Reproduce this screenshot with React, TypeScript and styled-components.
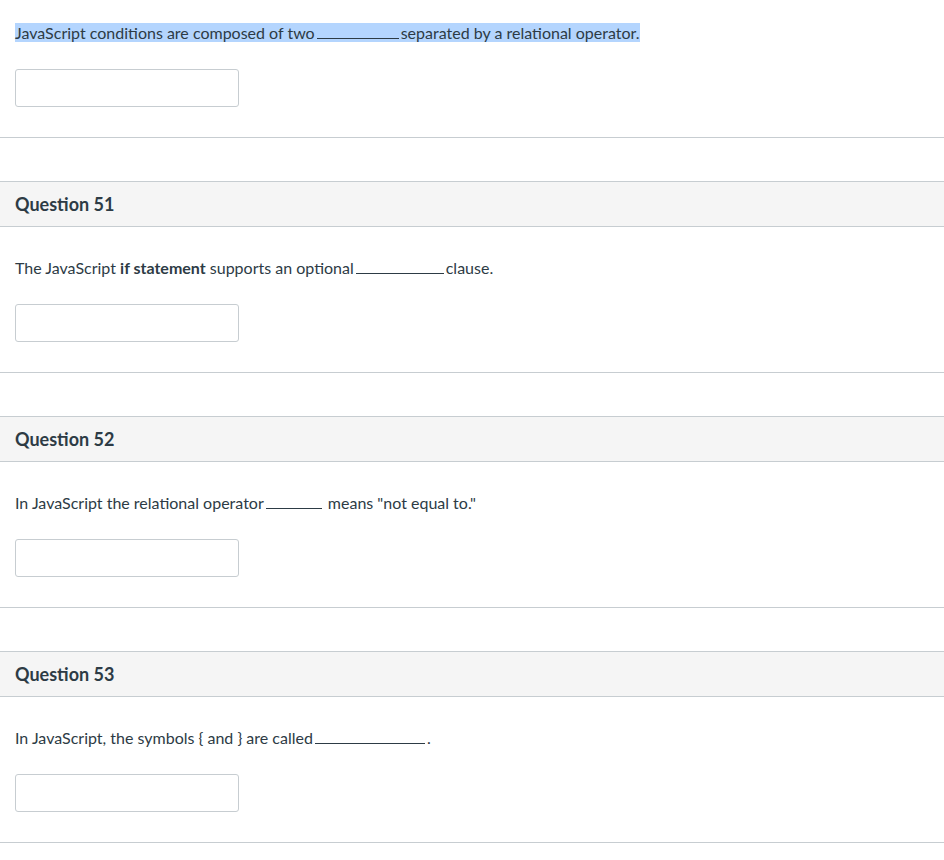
import React from 'react';
import styled, { createGlobalStyle } from 'styled-components';

const Global = createGlobalStyle`
  body {
    margin: 0;
    background: #fff;
    font-family: Lato, "Open Sans", sans-serif;
    color: #2d3b45;
  }
`;

const Page = styled.div`
  width: 944px;
`;

const Block = styled.div`
  border-bottom: 1px solid #c7cdd1;
`;

const Header = styled.div`
  margin-top: 43px;
  height: 44px;
  background: #f5f5f5;
  border-top: 1px solid #c7cdd1;
  border-bottom: 1px solid #c7cdd1;
  display: flex;
  align-items: center;
  padding-left: 15px;
  font-size: 18px;
  font-weight: 700;
`;

const Body = styled.div<{ top: number }>`
  padding: ${p => p.top}px 15px 30px;
`;

const Prompt = styled.div`
  font-size: 16px;
  line-height: 20px;
  white-space: pre;
`;

const Mark = styled.span`
  background: #b4d5fe;
`;

const Blank = styled.span<{ w: number }>`
  display: inline-block;
  width: ${p => p.w}px;
  height: 15px;
  border-bottom: 1px solid #2d3b45;
  margin: 0 2px;
  vertical-align: baseline;
`;

const Answer = styled.input`
  display: block;
  margin-top: 26px;
  width: 224px;
  height: 38px;
  box-sizing: border-box;
  border: 1px solid #c7cdd1;
  border-radius: 3px;
  background: #fff;
`;

const questions: { n: number; text: React.ReactNode }[] = [
  {
    n: 51,
    text: (
      <>
        The JavaScript <b>if statement</b> supports an optional<Blank w={88} />clause.
      </>
    ),
  },
  {
    n: 52,
    text: (
      <>
        In JavaScript the relational operator<Blank w={56} /> means "not equal to."
      </>
    ),
  },
  {
    n: 53,
    text: (
      <>
        In JavaScript, the symbols {'{'} and {'}'} are called<Blank w={110} />.
      </>
    ),
  },
];

export default function App() {
  return (
    <Page>
      <Global />
      <Block>
        <Body top={23}>
          <Prompt>
            <Mark>
              JavaScript conditions are composed of two<Blank w={82} />separated by a relational operator.
            </Mark>
          </Prompt>
          <Answer />
        </Body>
      </Block>
      {questions.map(q => (
        <Block key={q.n}>
          <Header>Question {q.n}</Header>
          <Body top={31}>
            <Prompt>{q.text}</Prompt>
            <Answer />
          </Body>
        </Block>
      ))}
    </Page>
  );
}
